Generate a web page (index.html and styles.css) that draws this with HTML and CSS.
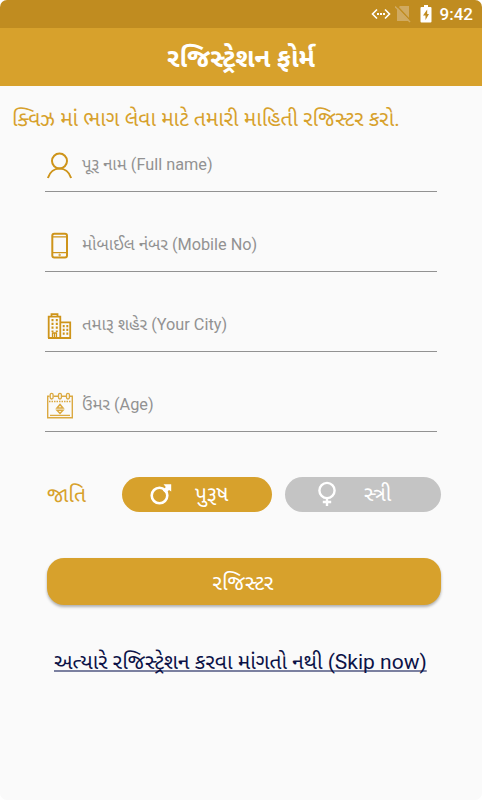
FILE: index.html
```html
<!DOCTYPE html>
<html lang="gu">
<head>
  <meta charset="utf-8">
  <title>રજિસ્ટ્રેશન ફોર્મ</title>
  <link rel="stylesheet" href="styles.css">
</head>
<body>
<div class="screen">
  <div class="status-bar">
    <svg class="usb" width="20" height="12" viewBox="0 0 20 12">
      <path d="M6 1.5L1.5 6L6 10.5M14 1.5L18.500 6L14 10.500" fill="none" stroke="#fff" stroke-width="1.6"/>
      <path d="M6 5h2v2H6zM9 5h2v2H9zM12 5h2v2h-2z" fill="#fff"/>
    </svg>
    <svg class="nosim" width="16" height="18" viewBox="0 0 16 18">
      <path d="M5 1h9v15H2V4z" fill="#d0aa61"/>
      <path d="M1 0L16 16" stroke="#c08c20" stroke-width="1.500"/>
      <path d="M0 1.500L15 17" stroke="#d0aa61" stroke-width="1.500"/>
    </svg>
    <svg class="battery" width="12" height="18" viewBox="0 0 12 18">
      <path d="M4 0h4v2h2.500q1 0 1 1v13.500q0 1-1 1h-9q-1 0-1-1V3q0-1 1-1H4z" fill="#fff"/>
      <path d="M7.200 4.500L3 10.500H5.500V15L9 9H7.200z" fill="#c08c20"/>
    </svg>
    <span class="clock">9:42</span>
  </div>
  <header class="title-bar"><h1>રજિસ્ટ્રેશન ફોર્મ</h1></header>

  <p class="intro">ક્વિઝ માં ભાગ લેવા માટે તમારી માહિતી રજિસ્ટર કરો.</p>

  <form class="form">
    <label class="field">
      <svg width="28" height="28" viewBox="0 0 28 28" class="icon">
        <circle cx="14.500" cy="9" r="7.500"/>
        <path d="M2.900 26C4.700 20 9.500 16.600 14.500 16.600S24.300 20 26.100 26"/>
      </svg>
      <span><b class="gu">પૂરૂ નામ</b> (Full name)</span>
    </label>
    <label class="field">
      <svg width="28" height="28" viewBox="0 0 28 28" class="icon">
        <rect x="7.300" y="1.700" width="14.700" height="23.800" rx="2"/>
        <path d="M7.300 4.800h14.700M7.300 20.700h14.700" stroke-width="1.300"/>
        <circle cx="14.600" cy="23" r=".8" stroke-width="1"/>
      </svg>
      <span><b class="gu">મોબાઈલ નંબર</b> (Mobile No)</span>
    </label>
    <label class="field">
      <svg width="28" height="28" viewBox="0 0 28 28" class="icon">
        <path d="M3.700 26V4.700h11.600V26M15.300 10.300h9.900V26H3M6.500 4.700V2.200h6V4.700" stroke-width="1.800"/>
        <path d="M7.500 26v-5h4v5M9.500 21v5" stroke-width="1.300"/>
        <path d="M7.500 7v13M11.800 7v13" stroke-width="2" stroke-dasharray="2.200 1.600"/>
        <path d="M18.700 13v10M22.300 13v10" stroke-width="1.900" stroke-dasharray="2.200 1.600"/>
      </svg>
      <span><b class="gu">તમારૂ શહેર</b> (Your City)</span>
    </label>
    <label class="field">
      <svg width="28" height="28" viewBox="0 0 28 28" class="icon light">
        <path d="M4.500 4.200H2.700V25.800h24.600V4.200H25M8.500 4.200h4.500M17 4.200h4" stroke-width="1.400"/>
        <rect x="5.200" y="1.400" width="2.900" height="5.600" rx="1.400" stroke-width="1.300"/>
        <rect x="13.500" y="1.400" width="2.900" height="5.600" rx="1.400" stroke-width="1.300"/>
        <rect x="21.500" y="1.400" width="2.900" height="5.600" rx="1.400" stroke-width="1.300"/>
        <path d="M4 9.500h22" stroke-width="1.300" stroke-dasharray="1.500 1"/>
        <path d="M5 23.400h20" stroke-width="1.300"/>
        <path d="M12 16L15 12.500l3 3.500zM12 18.300L15 21.500l3-3.200z" stroke-width="1.500"/>
      </svg>
      <span><b class="gu">ઉંમર</b> (Age)</span>
    </label>

    <div class="gender">
      <span class="gender-label">જાતિ</span>
      <button type="button" class="pill male">
        <svg width="22" height="22" viewBox="0 0 22 22">
          <circle cx="9.500" cy="12.500" r="7.800" fill="none" stroke="#fff" stroke-width="2.600"/>
          <path d="M13.500 1.200H21.200V8.500L19 7L15.800 10.200L12.800 7.500L15.800 4z" fill="#fff"/>
        </svg>
        <span>પુરૂષ</span>
      </button>
      <button type="button" class="pill female">
        <svg width="18" height="26" viewBox="0 0 18 26">
          <circle cx="9" cy="9.500" r="7.600" fill="none" stroke="#fff" stroke-width="2.400"/>
          <path d="M9 17v8M4.800 21h8.400" stroke="#fff" stroke-width="2.400"/>
        </svg>
        <span>સ્ત્રી</span>
      </button>
    </div>

    <button type="button" class="register">રજિસ્ટર</button>
  </form>

  <a class="skip">અત્યારે રજિસ્ટ્રેશન કરવા માંગતો નથી (Skip now)</a>
</div>
</body>
</html>
```
FILE: styles.css
```css
body {
  margin: 0;
  background: #fff;
  font-family: Roboto, "Noto Sans Gujarati", "Noto Sans", sans-serif;
}
.screen {
  height: 800px;
  background: #fafafa;
  border-radius: 7px;
  overflow: hidden;
}
.status-bar {
  box-sizing: border-box;
  height: 28px;
  padding-right: 9px;
  background: #c08c20;
  display: flex;
  align-items: center;
  justify-content: flex-end;
}
.nosim {
  margin-left: 4px;
}
.battery {
  margin: 0 8px 0 9px;
}
.clock {
  color: #fff;
  font-size: 17px;
  font-weight: 500;
  line-height: 28px;
}
.title-bar {
  height: 58px;
  background: #d7a12c;
  display: flex;
  align-items: center;
  justify-content: center;
}
h1 {
  margin: 0;
  padding-top: 7px;
  color: #fff;
  font-size: 26px;
  font-weight: bold;
  white-space: nowrap;
}
.intro {
  margin: 17px 0 0 12px;
  height: 28px;
  line-height: 32px;
  font-size: 20.95px;
  color: #d7a12c;
  white-space: nowrap;
}
.form {
  padding: 1px 41px 0 45px;
}
.field {
  box-sizing: border-box;
  display: flex;
  align-items: center;
  width: 392px;
  height: 60px;
  margin-bottom: 20px;
  padding-top: 9px;
  border-bottom: 1px solid #929292;
  font-size: 16.3px;
  color: #929292;
  white-space: nowrap;
}
.field span {
  margin-left: 9px;
  padding-bottom: 1px;
}
.field .gu {
  font-size: 16.8px;
  font-weight: normal;
}
.icon {
  fill: none;
  stroke: #ce941a;
  stroke-width: 2;
}
.light {
  stroke: #dba941;
}
.gender {
  display: flex;
  align-items: center;
  height: 36px;
  margin-top: 44px;
}
.gender-label {
  width: 75px;
  padding: 5px 0 0 2px;
  font-size: 21px;
  color: #d7a12c;
}
.pill {
  box-sizing: border-box;
  display: flex;
  align-items: center;
  height: 35px;
  padding: 0;
  border: 0;
  border-radius: 18px;
  color: #fff;
  font: inherit;
  font-size: 21px;
}
.pill span {
  padding-top: 4px;
}
.male {
  width: 150px;
  padding-left: 28px;
  background: #d7a12c;
}
.male span {
  margin-left: 23px;
}
.female {
  width: 156px;
  margin-left: 13px;
  padding-left: 33px;
  background: #c4c4c4;
}
.female span {
  margin-left: 28px;
}
.register {
  display: block;
  width: 394px;
  height: 47px;
  margin: 46px 0 0 2px;
  padding: 5px 2px 0 0;
  border: 0;
  border-radius: 17px;
  background: #d7a12c;
  box-shadow: 0 2px 3px rgba(0, 0, 0, 0.3);
  color: #fff;
  font: inherit;
  font-size: 21.2px;
}
.skip {
  display: block;
  width: max-content;
  height: 27px;
  margin: 43px 0 0 54px;
  line-height: 28px;
  font-size: 21px;
  color: #0c1247;
  white-space: nowrap;
  text-decoration: underline;
  text-decoration-color: #7b80a0;
  text-decoration-thickness: 2px;
  text-decoration-skip-ink: none;
  text-underline-offset: 1px;
}
```
